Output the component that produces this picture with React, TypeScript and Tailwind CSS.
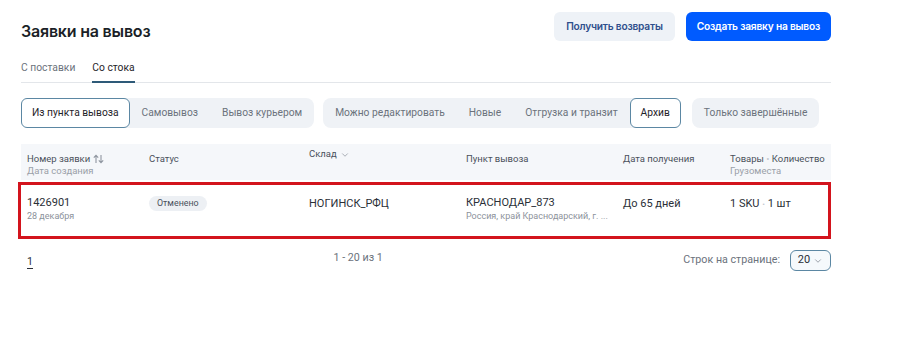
import React from 'react';
import { ChevronDown } from 'lucide-react';

const deliveryFilters = ['Из пункта вывоза', 'Самовывоз', 'Вывоз курьером'];
const stageFilters = ['Можно редактировать', 'Новые', 'Отгрузка и транзит', 'Архив'];

const SortIcon = () => (
  <svg width="11" height="10" viewBox="0 0 11 10" className="ml-[3px] inline-block" fill="none" stroke="#8f96a0" strokeWidth="1.1">
    <path d="M3 9V1.5M0.8 3.6L3 1.3L5.2 3.6" />
    <path d="M8 1v7.5M5.8 6.4L8 8.7L10.2 6.4" />
  </svg>
);

const Pill: React.FC<{ label: string; active?: boolean }> = ({ label, active }) => (
  <button
    className={
      active
        ? 'h-[30px] px-[10px] whitespace-nowrap rounded-md border border-[#5b87a3] bg-white text-[#1f2329]'
        : 'h-[30px] px-3 whitespace-nowrap text-[#6b727c]'
    }
  >
    {label}
  </button>
);

const App: React.FC = () => {
  return (
    <div className="w-[918px] h-[338px] bg-white font-['Roboto',sans-serif] text-[#1f2329] whitespace-nowrap">
      <div className="ml-[21px] w-[810px] pt-3">
        {/* header */}
        <div className="flex justify-between items-start">
          <h1 className="mt-[8px] font-['Inter',sans-serif] text-[16px] font-semibold leading-[22px] tracking-[-0.2px] text-[#1b1f27]">Заявки на вывоз</h1>
          <div className="flex gap-[11px]">
            <button className="h-[29px] px-3 rounded-md bg-[#eef2f7] font-['Inter',sans-serif] text-[10.2px] font-semibold tracking-[-0.2px] text-[#2f4f8c]">Получить возвраты</button>
            <button className="h-[29px] px-[11px] rounded-md bg-[#005bff] font-['Inter',sans-serif] text-[10.2px] font-semibold tracking-[-0.2px] text-white">Создать заявку на вывоз</button>
          </div>
        </div>

        {/* tabs */}
        <div className="mt-[19px] flex gap-[17px] border-b border-[#e3e6ea] text-[10.3px] leading-[14px]">
          <div className="pb-[7px] text-[#6b727c]">С поставки</div>
          <div className="pb-[6px] border-b-2 border-[#2e5a78] -mb-px text-[#1f2329]">Со стока</div>
        </div>

        {/* filters */}
        <div className="mt-[15px] flex gap-[9px] text-[10.25px]">
          <div className="flex rounded-lg bg-[#eff2f6]">
            {deliveryFilters.map((f, i) => (
              <Pill key={f} label={f} active={i === 0} />
            ))}
          </div>
          <div className="flex rounded-lg bg-[#eff2f6]">
            {stageFilters.map((f) => (
              <Pill key={f} label={f} active={f === 'Архив'} />
            ))}
          </div>
          <div className="ml-[2px] flex rounded-lg bg-[#eff2f6]">
            <Pill label="Только завершённые" />
          </div>
        </div>

        {/* table header */}
        <div className="mt-[16px] h-[36px] bg-[#f5f7fa] pl-[6px] pt-[9px] grid grid-cols-[122px_160px_157px_157px_107px_1fr] text-[9.5px] leading-[12px] text-[#4a515b]">
          <div>
            <div className="flex items-center">Номер заявки<SortIcon /></div>
            <div className="text-[#9aa0a8]">Дата создания</div>
          </div>
          <div>Статус</div>
          <div className="-mt-[5px] flex items-start">
            Склад
            <ChevronDown size={10} className="ml-[3px] mt-[2px] text-[#9aa0a8]" />
          </div>
          <div>Пункт вывоза</div>
          <div>Дата получения</div>
          <div>
            <div>
              Товары <span className="text-[#c3c8cf]">•</span> Количество
            </div>
            <div className="text-[#9aa0a8]">Грузоместа</div>
          </div>
        </div>

        {/* row */}
        <div className="-ml-[3px] mt-[2px] w-[813px] h-[57px] border-[3px] border-[#d3141d] pl-[6px] pt-[11px] grid grid-cols-[122px_160px_157px_157px_107px_1fr] text-[11px] leading-[14px] text-[#2a2f37]">
          <div>
            <div>1426901</div>
            <div className="text-[9px] leading-[12px] text-[#8c929b]">28 декабря</div>
          </div>
          <div>
            <span className="inline-block px-2 h-[15px] leading-[15px] rounded-full bg-[#edf0f4] text-[8.9px] text-[#4a515b]">Отменено</span>
          </div>
          <div className="pt-[1px]">НОГИНСК_РФЦ</div>
          <div>
            <div>КРАСНОДАР_873</div>
            <div className="text-[9px] leading-[12px] text-[#8c929b]">Россия, край Краснодарский, г. ...</div>
          </div>
          <div className="pt-[1px]">До 65 дней</div>
          <div className="pt-[1px]">
            1 SKU <span className="text-[#c3c8cf] text-[8px]">•</span> 1 шт
          </div>
        </div>

        {/* pagination */}
        <div className="mt-[11px] pl-[6px] flex justify-between items-center text-[10.7px] text-[#6b727c]">
          <span className="mt-[3px] text-[#2a2f37] underline underline-offset-[3px] decoration-[#2a2f37]">1</span>
          <span className="-mt-[4px]">1 - 20 из 1</span>
          <div className="flex items-center gap-[10px]">
            <span>Строк на странице:</span>
            <button className="h-[21px] w-[41px] rounded-md border border-[#5b87a3] bg-[#f5f9fc] flex items-center justify-center gap-[3px] text-[11px] text-[#2a2f37]">
              20
              <ChevronDown size={10} className="text-[#8c929b]" />
            </button>
          </div>
        </div>
      </div>
    </div>
  );
};

export default App;
